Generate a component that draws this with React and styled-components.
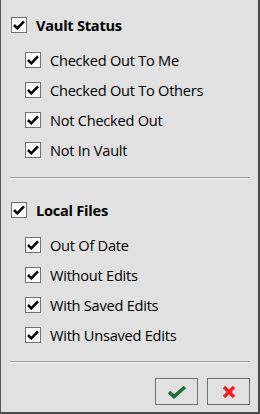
import React from 'react';
import styled, { createGlobalStyle } from 'styled-components';

const GlobalStyle = createGlobalStyle`
  html, body {
    margin: 0;
    padding: 0;
    background: #e1e1e1;
  }
`;

const Panel = styled.div`
  box-sizing: border-box;
  width: 260px;
  height: 414px;
  background: #e1e1e1;
  border-left: 1px solid #5a5a5a;
  border-right: 2px solid #4a4a4a;
  border-bottom: 2px solid #4a4a4a;
  padding: 10px 8px 0 9px;
  display: flex;
  flex-direction: column;
  font-family: "Open Sans", "Noto Sans", sans-serif;
  color: #000;
`;

const Group = styled.div`
  display: flex;
  flex-direction: column;
`;

const Row = styled.label`
  display: flex;
  align-items: center;
  gap: 9px;
  height: 30px;
  padding-left: ${p => (p.$header ? '1px' : '15px')};
  margin-bottom: ${p => (p.$header ? '5px' : '0')};
  font-size: 14.6px;
  letter-spacing: -0.25px;
  font-weight: ${p => (p.$header ? 700 : 400)};
  white-space: nowrap;
`;

const Box = styled.span`
  box-sizing: border-box;
  width: 16px;
  height: 16px;
  border: 1px solid #707070;
  background: #fafafa;
  display: flex;
  align-items: center;
  justify-content: center;
  flex: none;
`;

const Separator = styled.div`
  height: 1px;
  background: #a0a0a0;
  border-bottom: 1px solid #f4f4f4;
  margin: ${p => p.$top}px 0 ${p => p.$bottom}px;
`;

const Footer = styled.div`
  display: flex;
  justify-content: flex-end;
  gap: 9px;
`;

const Button = styled.button`
  box-sizing: border-box;
  width: 43px;
  height: 27px;
  border: 1px solid #707070;
  background: #e1e1e1;
  padding: 0;
  display: flex;
  align-items: center;
  justify-content: center;
`;

const Check = () => (
  <svg width="12" height="10" viewBox="0 0 12 10">
    <polyline points="1,5 4.3,8.3 11,1.3" fill="none" stroke="#000" strokeWidth="2.5" />
  </svg>
);

const CheckBox = ({ label, header }) => (
  <Row $header={header}>
    <Box>
      <Check />
    </Box>
    {label}
  </Row>
);

const sections = [
  { title: 'Vault Status', items: ['Checked Out To Me', 'Checked Out To Others', 'Not Checked Out', 'Not In Vault'] },
  { title: 'Local Files', items: ['Out Of Date', 'Without Edits', 'With Saved Edits', 'With Unsaved Edits'] },
];

export default function App() {
  return (
    <>
      <GlobalStyle />
      <Panel>
        <Group>
          <CheckBox header label={sections[0].title} />
          {sections[0].items.map(i => <CheckBox key={i} label={i} />)}
        </Group>
        <Separator $top={12} $bottom={16} />
        <Group>
          <CheckBox header label={sections[1].title} />
          {sections[1].items.map(i => <CheckBox key={i} label={i} />)}
        </Group>
        <Separator $top={11} $bottom={15} />
        <Footer>
          <Button>
            <svg width="20" height="14" viewBox="0 0 20 14">
              <polyline points="2,7 7,11.5 18,2" fill="none" stroke="#17733a" strokeWidth="3.6" />
            </svg>
          </Button>
          <Button>
            <svg width="14" height="14" viewBox="0 0 14 14">
              <path d="M2,2 L12,12 M12,2 L2,12" fill="none" stroke="#ee1c25" strokeWidth="3.4" />
            </svg>
          </Button>
        </Footer>
      </Panel>
    </>
  );
}
